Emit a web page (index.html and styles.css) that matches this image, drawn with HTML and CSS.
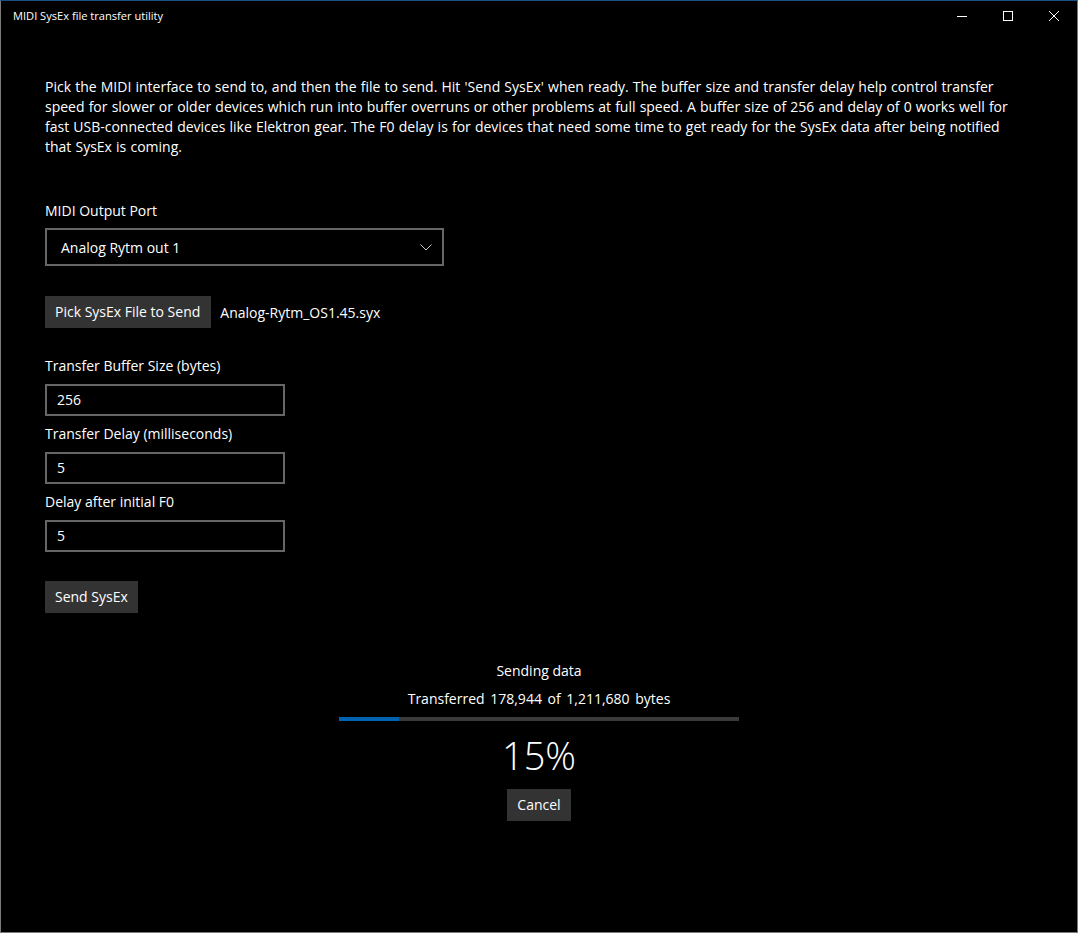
FILE: index.html
```html
<!DOCTYPE html>
<html>
<head>
<meta charset="utf-8">
<link rel="stylesheet" href="styles.css">
</head>
<body>
<div class="window">
  <div class="titlebar">
    <span class="title">MIDI SysEx file transfer utility</span>
    <div class="controls">
      <div class="ctl"><svg width="10" height="10" viewBox="0 0 10 10"><path d="M0 5.5H10" stroke="#fff" stroke-width="1"/></svg></div>
      <div class="ctl"><svg width="10" height="10" viewBox="0 0 10 10"><rect x="0.5" y="0.5" width="9" height="9" fill="none" stroke="#fff" stroke-width="1"/></svg></div>
      <div class="ctl"><svg width="10" height="10" viewBox="0 0 10 10"><path d="M0 0L10 10M10 0L0 10" stroke="#fff" stroke-width="1"/></svg></div>
    </div>
  </div>
  <div class="content">
    <p class="intro">Pick the MIDI interface to send to, and then the file to send. Hit 'Send SysEx' when ready. The buffer size and transfer delay help control transfer speed for slower or older devices which run into buffer overruns or other problems at full speed. A buffer size of 256 and delay of 0 works well for fast USB-connected devices like Elektron gear. The F0 delay is for devices that need some time to get ready for the SysEx data after being notified that SysEx is coming.</p>

    <div class="label port-label">MIDI Output Port</div>
    <div class="combo">
      <span>Analog Rytm out 1</span>
      <svg width="12" height="7" viewBox="0 0 12 7"><path d="M0.5 0.5L6 6L11.5 0.5" fill="none" stroke="#ccc" stroke-width="1"/></svg>
    </div>

    <div class="pick-row">
      <div class="btn pick">Pick SysEx File to Send</div>
      <span class="filename">Analog-Rytm_OS1.45.syx</span>
    </div>

    <div class="label field-label first">Transfer Buffer Size (bytes)</div>
    <div class="textbox">256</div>
    <div class="label field-label">Transfer Delay (milliseconds)</div>
    <div class="textbox">5</div>
    <div class="label field-label">Delay after initial F0</div>
    <div class="textbox">5</div>

    <div class="btn send">Send SysEx</div>

    <div class="progress-area">
      <div class="status">Sending data</div>
      <div class="transferred">Transferred 178,944 of 1,211,680 bytes</div>
      <div class="bar"><div class="fill" style="width:15%"></div></div>
      <div class="percent">15%</div>
      <div class="btn cancel">Cancel</div>
    </div>
  </div>
</div>
</body>
</html>
```
FILE: styles.css
```css
html, body {
  margin: 0;
  padding: 0;
  background: #000;
}
.window {
  width: 1078px;
  height: 933px;
  box-sizing: border-box;
  border: 1px solid #7a7a7a;
  border-top: 1px solid #1a4f85;
  background: #000;
  color: #fff;
  font-family: "Open Sans", "Noto Sans", sans-serif;
  font-size: 14px;
  display: flex;
  flex-direction: column;
}
.titlebar {
  height: 31px;
  display: flex;
  align-items: center;
  justify-content: space-between;
  flex-shrink: 0;
}
.title {
  font-size: 11.1px;
  padding-left: 12px;
  padding-bottom: 2px;
}
.controls {
  display: flex;
  height: 100%;
}
.ctl {
  width: 46px;
  height: 100%;
  display: flex;
  align-items: center;
  justify-content: center;
  padding-bottom: 2px;
  box-sizing: border-box;
}
.content {
  padding: 0 44px;
  display: flex;
  flex-direction: column;
  align-items: flex-start;
}
.intro {
  margin: 45px 0 0 0;
  line-height: 20px;
  width: 975px;
  word-spacing: 0.5px;
}
.label {
  line-height: 20px;
}
.port-label {
  margin-top: 44px;
}
.combo {
  margin-top: 7px;
  width: 399px;
  height: 38px;
  box-sizing: border-box;
  border: 2px solid #666;
  display: flex;
  align-items: center;
  justify-content: space-between;
  padding: 0 10px 0 14px;
}
.pick-row {
  margin-top: 30px;
  display: flex;
  align-items: center;
  gap: 9px;
}
.btn {
  background: #333;
  height: 32px;
  line-height: 32px;
  padding: 0 10px;
  box-sizing: border-box;
}
.btn.pick {
  padding: 0 11px 0 10px;
}
.field-label {
  margin-top: 8px;
}
.field-label.first {
  margin-top: 28px;
}
.field-label + .textbox {
  margin-top: 8px;
}
.textbox {
  width: 240px;
  height: 32px;
  box-sizing: border-box;
  border: 2px solid #666;
  line-height: 28px;
  padding-left: 10px;
}
.send {
  margin-top: 29px;
}
.progress-area {
  align-self: stretch;
  display: flex;
  flex-direction: column;
  align-items: center;
  margin-top: 48px;
  margin-left: -44px;
  margin-right: -44px;
}
.status {
  line-height: 20px;
}
.transferred {
  line-height: 20px;
  margin-top: 8px;
  word-spacing: 2px;
}
.bar {
  margin-top: 8px;
  width: 400px;
  height: 4px;
  background: #3a3a3a;
}
.fill {
  height: 100%;
  background: #0063b1;
}
.percent {
  font-size: 38px;
  font-weight: 300;
  line-height: 52px;
  margin-top: 8px;
}
.cancel {
  margin-top: 8px;
}
```
